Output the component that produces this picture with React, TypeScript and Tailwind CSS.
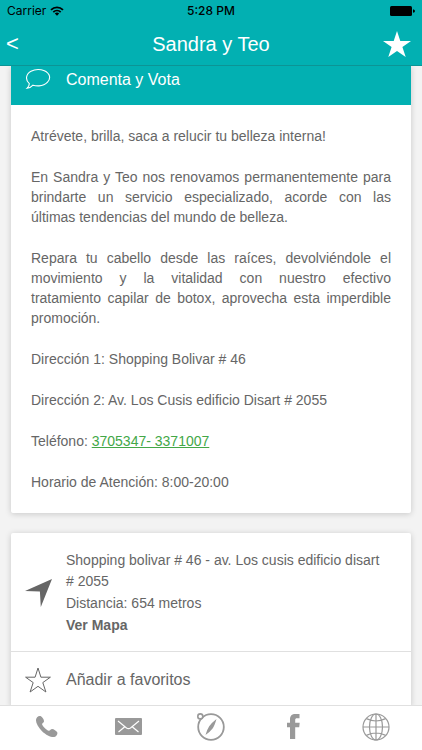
import type { ReactNode } from "react";

interface TabProps {
  label: string;
  children: ReactNode;
}

function Tab({ label, children }: TabProps) {
  return (
    <button type="button" aria-label={label} className="flex h-full flex-1 items-center justify-center text-[#999999]">
      {children}
    </button>
  );
}

function StatusBar() {
  return (
    <div className="grid h-[22px] grid-cols-3 items-center px-[7px] text-xs text-black">
      <div className="flex items-center gap-1">
        <span>Carrier</span>
        <svg viewBox="0 0 14 10" className="h-[10px] w-[14px]" fill="none" stroke="currentColor" strokeWidth="1.8">
          <path d="M1 3.9 C4.4 .5 9.6 .5 13 3.9" />
          <path d="M3.3 6.1 C5.4 4.1 8.6 4.1 10.7 6.1" />
          <path d="M4.8 7.5 Q7 5.7 9.2 7.5 L7 9.8Z" fill="currentColor" stroke="none" />
        </svg>
      </div>
      <span className="text-center font-medium">5:28 PM</span>
      <svg viewBox="0 0 25 10" className="h-[10px] w-[25px] justify-self-end" fill="currentColor">
        <rect width="22" height="10" rx="1.5" />
        <path d="M23 3.2 Q25 3.6 25 5 Q25 6.4 23 6.8Z" />
      </svg>
    </div>
  );
}

function Header() {
  return (
    <header className="z-10 shrink-0 border-b border-[#0c9495] bg-[#02b0b2] font-['Inter','Liberation_Sans',sans-serif]">
      <StatusBar />
      <div className="grid h-[43px] grid-cols-[1fr_auto_1fr] items-center px-[6px] font-['Liberation_Sans',Arial,sans-serif] text-white">
        <button type="button" aria-label="Volver" className="justify-self-start text-[22px] font-normal">
          &lt;
        </button>
        <h1 className="text-xl">Sandra y Teo</h1>
        <button type="button" aria-label="Favorito" className="justify-self-end pr-[5px]">
          <svg viewBox="0 0 28 26" className="h-[26px] w-7" fill="currentColor">
            <path d="M14 0 L17.3 9.9 H28 L19.4 16 L22.7 26 L14 19.9 L5.3 26 L8.6 16 L0 9.9 H10.7Z" />
          </svg>
        </button>
      </div>
    </header>
  );
}

function Description() {
  return (
    <div className="flex flex-col gap-[21px] px-5 py-[21px] text-justify text-sm">
      <p>Atrévete, brilla, saca a relucir tu belleza interna!</p>
      <p>
        En Sandra y Teo nos renovamos permanentemente para brindarte un servicio especializado, acorde con las últimas
        tendencias del mundo de belleza.
      </p>
      <p>
        Repara tu cabello desde las raíces, devolviéndole el movimiento y la vitalidad con nuestro efectivo
        tratamiento&nbsp;capilar de botox, aprovecha esta imperdible promoción.
      </p>
      <p>Dirección 1: Shopping Bolivar # 46</p>
      <p>Dirección 2: Av. Los Cusis edificio Disart # 2055</p>
      <p>
        Teléfono:{" "}
        <a href="tel:3705347" className="text-[#43a747] underline">
          3705347- 3371007
        </a>
      </p>
      <p>Horario de Atención: 8:00-20:00</p>
    </div>
  );
}

function TabBar() {
  return (
    <nav className="z-10 flex h-[45px] shrink-0 border-t border-[#e0e0e0] bg-white px-[5px] pb-[3px]">
      <Tab label="Llamar">
        <svg viewBox="0 0 24 24" className="h-[23px] w-[23px]" fill="currentColor">
          <path d="M2.2 2.3 C3.4 1 5.2 .7 6.2 1.4 C7.8 2.4 9.4 5 9.4 6.4 C9.4 7.9 7.2 8.4 7.4 9.6 C7.7 11.5 12.2 16 14.3 16.4 C15.8 16.6 16.4 14.8 17.9 14.7 C19.4 14.7 22.5 16.9 23.2 18.1 C23.9 19.5 22.5 21.8 20.9 22.6 C18.4 24 12.3 21.7 7.1 16.6 C2.5 11.9 -.9 5.5 2.2 2.3Z" />
        </svg>
      </Tab>
      <Tab label="Correo">
        <svg viewBox="0 0 27 17" className="h-[17px] w-[27px]">
          <rect width="27" height="17" rx="1" fill="currentColor" />
          <path d="M3 3 L11.5 10 Q13.5 11.2 15.5 10 L24 3 M3.5 14 L9.5 9 M23.5 14 L17.5 9" fill="none" stroke="white" strokeWidth="1.2" />
        </svg>
      </Tab>
      <Tab label="Explorar">
        <svg viewBox="0 0 30 30" className="h-[30px] w-[30px]" fill="none" stroke="currentColor" strokeWidth="1.8">
          <circle cx="15" cy="15" r="12.8" />
          <circle cx="4.3" cy="4.4" r="2.5" fill="white" strokeWidth="1.6" />
          <path d="M20.5 7 Q18.5 14 16.6 16.4 Q14.5 19.2 9.5 23 Q11.3 17 13.2 14.2 Q15.4 11 20.5 7Z" fill="currentColor" stroke="none" />
        </svg>
      </Tab>
      <Tab label="Facebook">
        <svg viewBox="0 0 13 25" className="h-[25px] w-[13px]" fill="currentColor">
          <path d="M3 25 V13.2 H0 V8.7 H3 V5.5 C3 1.8 4.8 0 8.5 0 H12.5 V4.3 H10 C8.7 4.3 8.2 4.8 8.2 6 V8.7 H12.7 L12.2 13.2 H8.2 V25Z" />
        </svg>
      </Tab>
      <Tab label="Sitio web">
        <svg viewBox="0 0 28 28" className="h-7 w-7" fill="none" stroke="currentColor" strokeWidth="1.2">
          <circle cx="14" cy="14" r="13" />
          <ellipse cx="14" cy="14" rx="6.5" ry="13" />
          <path d="M14 1 V27 M1 14 H27 M4.4 5.6 Q14 10.4 23.6 5.6 M4.4 22.4 Q14 17.6 23.6 22.4" />
        </svg>
      </Tab>
    </nav>
  );
}

export default function App() {
  return (
    <div className="flex h-screen flex-col bg-[#f3f3f3] font-['Liberation_Sans',Arial,sans-serif] text-[#666666]">
      <Header />
      <main className="flex min-h-0 flex-1 flex-col gap-5 overflow-hidden px-[11px]">
        <section className="shrink-0 rounded-b-xs bg-white shadow-[0_1px_6px_rgba(0,0,0,0.18)]">
          <button type="button" className="flex h-[39px] w-full gap-[15px] bg-[#02b0b2] px-[14px] text-left text-base text-white">
            <svg viewBox="0 0 26 22" className="mt-[2px] h-[22px] w-[26px]" fill="none" stroke="currentColor" strokeWidth="1.1">
              <path d="M4.3 15.6 C0 12 .8 6 6 3.2 C12 .1 21 1.2 24 6.8 C26.4 12.2 21 17.3 14 17.9 C11.5 18 9.5 17.7 8 17.2 Q5.6 19.9 2 20.3 Q4.4 18 4.3 15.6Z" />
            </svg>
            <span className="pt-[2px]">Comenta y Vota</span>
          </button>
          <Description />
        </section>
        <section className="shrink-0 rounded-t-xs bg-white shadow-[0_1px_6px_rgba(0,0,0,0.18)]">
          <div className="flex items-center gap-[14px] border-b border-[#e0e0e0] px-[14px] pt-[17px] pb-[15px] text-sm">
            <svg viewBox="0 0 27 28" className="h-7 w-[27px] shrink-0" fill="currentColor">
              <path d="M27 0 L15.8 28 L14.9 12.4 L0 12Z" />
            </svg>
            <div className="flex min-w-0 flex-1 flex-col gap-px leading-[21px]">
              <p>Shopping bolivar # 46 - av. Los cusis edificio disart #&nbsp;2055</p>
              <p>Distancia: 654 metros</p>
              <a href="#mapa" className="font-bold">
                Ver Mapa
              </a>
            </div>
          </div>
          <button type="button" className="flex h-[55px] w-full items-center gap-[15px] px-[14px] text-left text-base">
            <svg viewBox="0 0 26 26" className="h-[26px] w-[26px]" fill="none" stroke="currentColor">
              <path d="M13 1 L15.9 10.2 H25.4 L17.8 15.6 L20.9 25 L13 19.3 L5.1 25 L8.2 15.6 L.6 10.2 H10.1Z" />
            </svg>
            Añadir a favoritos
          </button>
        </section>
      </main>
      <TabBar />
    </div>
  );
}
